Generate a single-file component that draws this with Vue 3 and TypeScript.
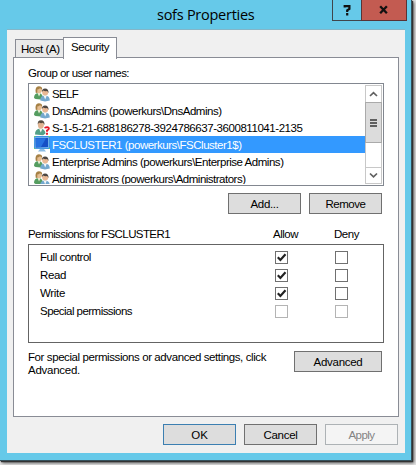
<script setup lang="ts">
import { ref } from 'vue'
import type { Directive } from 'vue'

interface Principal {
  name: string
  icon: 'group' | 'unknown' | 'computer'
  width: number
}
interface Permission {
  name: string
  width: number
  allow: boolean
  deny: boolean
  disabled: boolean
}

const vFit: Directive<HTMLElement, number> = {
  mounted(el, binding) {
    const natural = el.getBoundingClientRect().width
    const count = (el.textContent ?? '').trim().length
    el.style.letterSpacing = `${(binding.value - natural) / count}px`
  },
}

const principals: Principal[] = [
  { name: 'SELF', icon: 'group', width: 26 },
  { name: 'DnsAdmins (powerkurs\\DnsAdmins)', icon: 'group', width: 169.5 },
  { name: 'S-1-5-21-688186278-3924786637-3600811041-2135', icon: 'unknown', width: 250.5 },
  { name: 'FSCLUSTER1 (powerkurs\\FSCluster1$)', icon: 'computer', width: 189.5 },
  { name: 'Enterprise Admins (powerkurs\\Enterprise Admins)', icon: 'group', width: 231.5 },
  { name: 'Administrators (powerkurs\\Administrators)', icon: 'group', width: 193.5 },
]
const selected = ref(3)

const permissions = ref<Permission[]>([
  { name: 'Full control', width: 51, allow: true, deny: false, disabled: false },
  { name: 'Read', width: 26, allow: true, deny: false, disabled: false },
  { name: 'Write', width: 25, allow: true, deny: false, disabled: false },
  { name: 'Special permissions', width: 92, allow: false, deny: false, disabled: true },
])

function toggle(p: Permission, key: 'allow' | 'deny') {
  if (!p.disabled) p[key] = !p[key]
}
</script>

<template>
  <div class="screen">
    <div class="window">
      <header class="titlebar">
        <h1><span v-fit="97.5">sofs Properties</span></h1>
        <div class="caption">
          <button class="help" aria-label="Help">
            <svg width="28" height="20" viewBox="0 0 28 20"><path d="M11.7 7.4V6.2H16.4V9L14.2 10.4V12M14.2 13V15.4" fill="none" stroke="#111" stroke-width="2.2" /></svg>
          </button>
          <button class="close" aria-label="Close">
            <svg width="46" height="20" viewBox="0 0 46 20"><path d="M19 6L26 13.4M26 6L19 13.4" fill="none" stroke="#111" stroke-width="2.4" /></svg>
          </button>
        </div>
      </header>

      <main class="client">
        <nav class="tabs">
          <button class="tab host"><span v-fit="38.5">Host (A)</span></button>
          <button class="tab active"><span v-fit="38">Security</span></button>
        </nav>

        <section class="panel">
          <p class="label"><span v-fit="101">Group or user names:</span></p>
          <div class="listbox">
            <ul>
              <li v-for="(p, i) in principals" :key="p.name" :class="{ selected: i === selected }" @click="selected = i">
                <svg v-if="p.icon === 'group'" class="icon" viewBox="0 0 16 16">
                  <path d="M0 12.5Q0 7.5 5 7.5Q8 7.5 9 12L7 14L1.5 13.5Z" fill="#559d60" />
                  <path d="M3.5 7.5L5 11L6.7 7.5Z" fill="#eef0d8" />
                  <circle cx="5" cy="4.6" r="3.1" fill="#e5bd92" />
                  <path d="M1.7 7.2Q.7 1 4.8 .7Q8.2 .7 8.2 4L6 2.7Q4.5 4 3.3 4L3.3 7.5Z" fill="#a68145" />
                  <path d="M6.3 15Q6 10.2 11 10Q15.8 10.2 15.8 15L11 16Z" fill="#73a8ce" />
                  <path d="M9.5 10L11.2 14L12.8 10Z" fill="#f4f6f8" />
                  <circle cx="11.2" cy="7.1" r="3" fill="#e9b995" />
                  <path d="M8 6.5Q7.8 2.9 11 2.9Q14.8 3 14.5 7.5L13.2 5.5Q10.5 6 9.3 5Z" fill="#4c4641" />
                </svg>
                <svg v-else-if="p.icon === 'unknown'" class="icon" viewBox="0 0 16 16">
                  <path d="M1 15Q.8 9.5 6.5 9Q11 9.5 11.5 14L9 15.8Z" fill="#54a087" />
                  <path d="M5 9L6.8 13L8.5 9Z" fill="#f2f4ed" />
                  <ellipse cx="6.9" cy="5.4" rx="3" ry="3.7" fill="#e1b491" />
                  <path d="M3.7 5Q3.4 .7 7 .7Q10.8 .7 10.5 5.5L9 3.3Q6.8 4.2 5 3.1Z" fill="#564c40" />
                  <path d="M10.8 8.7Q11.2 7.6 13 7.6Q15.2 7.7 14.7 9.5Q14.4 10.3 13 11V12.2M13 13.2V15.2" fill="none" stroke="#e51625" stroke-width="1.9" />
                </svg>
                <svg v-else class="icon" viewBox="0 0 16 17">
                  <path d="M0 0H16V13H0Z" fill="#3f91df" />
                  <path d="M.5 1H15V12L1 12.5Z" fill="#6db0ea" />
                  <path d="M1.5 2H14V11L1.8 11.5Z" fill="#164fc5" />
                  <path d="M2 2.2H12L7 11H2Z" fill="#2872e0" />
                  <path d="M6 13H10L12 15.5H4Z" fill="#8bbce4" />
                  <path d="M0 .5H1.5M14.5 .5H16M0 12.5H1M15 12.5H16" stroke="#67d968" />
                </svg>
                <div class="name"><span v-fit="p.width">{{ p.name }}</span></div>
              </li>
            </ul>
            <div class="scrollbar">
              <div class="arrow"><svg viewBox="0 0 15 15"><path d="M4 10L7.5 6.7L11 10" /></svg></div>
              <div class="thumb"><i /><i /><i /></div>
              <div class="arrow down"><svg viewBox="0 0 15 15"><path d="M4 5.5L7.5 8.8L11 5.5" /></svg></div>
            </div>
          </div>
          <div class="actions">
            <button class="btn"><span v-fit="28">Add...</span></button>
            <button class="btn"><span v-fit="40">Remove</span></button>
          </div>

          <div class="heading">
            <div><span v-fit="142">Permissions for FSCLUSTER1</span></div>
            <div><span v-fit="25">Allow</span></div>
            <div><span v-fit="25">Deny</span></div>
          </div>
          <div class="permissions">
            <div v-for="p in permissions" :key="p.name" class="permission">
              <div><span v-fit="p.width">{{ p.name }}</span></div>
              <button v-for="key in (['allow', 'deny'] as const)" :key="key" class="check" :disabled="p.disabled" :aria-label="key" @click="toggle(p, key)">
                <svg v-if="p[key]" viewBox="0 0 11 11"><path d="M1.8 5.3L4.4 8L9.5 2.3" fill="none" stroke="#222" stroke-width="2.2" /></svg>
              </button>
            </div>
          </div>
          <div class="advanced">
            <p>
              <span v-fit="238">For special permissions or advanced settings, click</span><br />
              <span v-fit="52">Advanced.</span>
            </p>
            <button class="btn wide"><span v-fit="49">Advanced</span></button>
          </div>
        </section>

        <footer>
          <button class="btn default"><span v-fit="16.5">OK</span></button>
          <button class="btn"><span v-fit="34">Cancel</span></button>
          <button class="btn" disabled><span v-fit="26">Apply</span></button>
        </footer>
      </main>
    </div>
  </div>
</template>

<style>
body {
  margin: 0;
  overflow: hidden;
}
</style>

<style scoped>
* {
  box-sizing: border-box;
}
.screen {
  width: 416px;
  height: 465px;
  overflow: hidden;
  background: #e4e4e4;
  font: 11.5px/13px "Liberation Sans", Arial, sans-serif;
  color: #000;
}
span {
  white-space: nowrap;
}
p, h1, ul {
  margin: 0;
  padding: 0;
}
button {
  margin: 0;
  padding: 0;
  font: inherit;
  color: inherit;
  border-radius: 0;
}
.window {
  width: 412px;
  height: 461px;
  background: #66c9e9;
  border-right: 1px solid #35515c;
  border-bottom: 1px solid #35515c;
  box-shadow: 1px 1px 1px #333, 2px 2px 3px #555;
}
.titlebar {
  height: 29px;
  display: grid;
  grid-template-columns: 332px 75px;
}
h1 {
  padding: 5px 0 0 157px;
  font: 14.5px/20px "Open Sans", "Noto Sans", sans-serif;
}
.caption {
  display: flex;
  height: 21px;
}
.caption button {
  display: flex;
  border: 1px solid #40454b;
  border-top: 0;
}
.caption .help {
  width: 29px;
  background: #66c9e9;
  border-right: 0;
}
.caption .close {
  width: 46px;
  background: #c35b51;
  border-color: #593335;
}
.client {
  width: 398px;
  height: 424px;
  margin-left: 7px;
  padding: 7px 6px 0;
  background: #f0f0f0;
  border-top: 1px solid #84b6c8;
}
.tabs {
  height: 20px;
  padding-left: 2px;
  display: flex;
  align-items: flex-end;
}
.tab {
  width: 48px;
  height: 18px;
  padding: 1px 0 0 5px;
  text-align: left;
  background: #eaeaea;
  border: 1px solid #898c95;
  border-width: 1px 0 0 1px;
}
.tab.active {
  width: 54px;
  height: 22px;
  margin-bottom: -2px;
  padding: 0 0 3px 7px;
  background: #fff;
  border-width: 1px 1px 0;
  z-index: 1;
}
.panel {
  width: 386px;
  height: 360px;
  padding: 9px 14px 0;
  background: #fff;
  border: 1px solid #898c95;
}
.label {
  height: 16px;
}
.listbox {
  width: 356px;
  height: 103px;
  padding: 1px;
  display: flex;
  border: 1px solid #828790;
}
ul {
  flex: 1;
  height: 99px;
  overflow: hidden;
  list-style: none;
}
li {
  height: 17px;
  padding-left: 4px;
  display: flex;
}
.icon {
  width: 16px;
  height: 17px;
  flex: none;
}
.name {
  flex: 1;
  padding: 3px 0 0 2px;
  line-height: 13px;
}
.selected .name {
  background: #3399ff;
  color: #fff;
}
.scrollbar {
  width: 17px;
  height: 99px;
  display: flex;
  flex-direction: column;
  border: 1px solid #c8c8c8;
}
.arrow {
  height: 16px;
}
.arrow svg {
  display: block;
  width: 15px;
  height: 15px;
}
.arrow path {
  fill: none;
  stroke: #606060;
  stroke-width: 1.7;
}
.arrow.down {
  margin-top: auto;
  border-top: 1px solid #c8c8c8;
}
.thumb {
  height: 41px;
  margin: 0 -1px;
  display: flex;
  flex-direction: column;
  align-items: center;
  justify-content: center;
  gap: 1px;
  background: #dcdcdc;
  border: 1px solid #aaa;
}
.thumb i {
  width: 7px;
  height: 2px;
  background: #606060;
}
.actions {
  height: 48px;
  padding: 7px 2px 0 0;
  display: flex;
  justify-content: flex-end;
  gap: 8px;
}
.btn {
  width: 73px;
  height: 21px;
  padding-top: 1px;
  background: #ddd;
  border: 1px solid #707070;
  text-align: center;
}
.btn.wide {
  width: 88px;
}
.btn.default {
  border-color: #3c7fb1;
}
.btn:disabled {
  color: #838383;
  background: #f4f4f4;
  border-color: #adb2b5;
}
.actions, .heading, .permissions, .advanced {
  width: 356px;
}
.heading {
  height: 16px;
  margin-top: -6px;
  display: grid;
  grid-template-columns: 245px 61px 50px;
}
.permissions {
  height: 99px;
  padding: 3px 11px 0;
  border: 1px solid #646464;
}
.permission {
  height: 18px;
  display: grid;
  grid-template-columns: 235px 60px 38px;
  align-items: center;
}
.check {
  width: 13px;
  height: 13px;
  background: #fff;
  border: 1px solid #707070;
}
.check:disabled {
  border-color: #b4b4b4;
}
.check svg {
  display: block;
  width: 11px;
  height: 11px;
}
.advanced {
  padding: 8px 2px 0 0;
  display: flex;
  justify-content: space-between;
}
footer {
  padding: 7px 1px 0 0;
  display: flex;
  justify-content: flex-end;
  gap: 8px;
}
</style>
